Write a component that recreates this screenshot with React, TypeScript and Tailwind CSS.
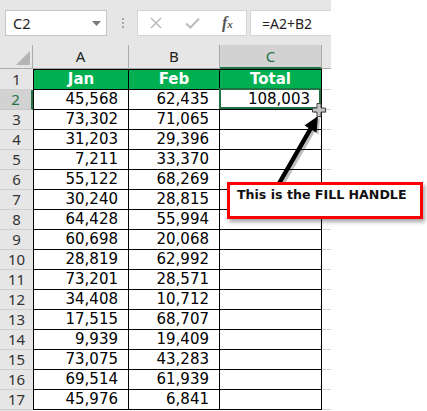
const data: [string, string][] = [
  ["45,568", "62,435"],
  ["73,302", "71,065"],
  ["31,203", "29,396"],
  ["7,211", "33,370"],
  ["55,122", "68,269"],
  ["30,240", "28,815"],
  ["64,428", "55,994"],
  ["60,698", "20,068"],
  ["28,819", "62,992"],
  ["73,201", "28,571"],
  ["34,408", "10,712"],
  ["17,515", "68,707"],
  ["9,939", "19,409"],
  ["73,075", "43,283"],
  ["69,514", "61,939"],
  ["45,976", "6,841"],
];

function TopBar() {
  return (
    <div className="flex h-[45px] w-[331px] items-start bg-[#e6e6e6] pl-[5px] pt-[10px] font-['Noto_Sans',sans-serif]">
      <div className="flex h-[26px] w-[102px] items-center justify-between border border-[#c6c6c6] bg-white pl-[7px] pr-[5px]">
        <span className="pt-[1px] text-[14.5px] leading-none text-[#222]">C2</span>
        <svg width="9" height="5" viewBox="0 0 9 5">
          <path d="M0 0 H9 L4.5 5 Z" fill="#7a7a7a" />
        </svg>
      </div>
      <div className="ml-[15px] mt-[8px] flex flex-col gap-[2px]">
        <div className="h-[2px] w-[2px] bg-[#a6a6a6]" />
        <div className="h-[2px] w-[2px] bg-[#a6a6a6]" />
        <div className="h-[2px] w-[2px] bg-[#a6a6a6]" />
      </div>
      <div className="ml-[13px] flex h-[26px] w-[110px] items-center border border-[#d4d4d4] bg-white pl-[12px]">
        <svg width="12" height="12" viewBox="0 0 12 12">
          <path d="M1 1 L11 11 M11 1 L1 11" stroke="#bdbdbd" strokeWidth="1.6" />
        </svg>
        <svg className="ml-[23px]" width="15" height="12" viewBox="0 0 15 12">
          <path d="M1 6.5 L5.5 10.5 L14 1.5" stroke="#bdbdbd" strokeWidth="2" fill="none" />
        </svg>
        <span className="ml-[22px] font-['Liberation_Serif',serif] text-[16px] font-bold italic leading-none text-[#555]">
          f<span className="text-[11px]">x</span>
        </span>
      </div>
      <div className="ml-[3px] flex h-[26px] flex-1 items-center border border-r-0 border-[#d4d4d4] bg-white pl-[11px] pt-[2px]">
        <span className="text-[14px] leading-none text-[#222]">=A2+B2</span>
      </div>
    </div>
  );
}

function HeaderRow() {
  return (
    <div className="flex h-[24px] w-[331px] bg-[#e6e6e6] font-['Noto_Sans',sans-serif] text-[15px] text-[#222]">
      <div className="relative w-[33px] border-b border-r border-[#ababab]">
        <svg className="absolute left-[15px] top-[5px]" width="16" height="16" viewBox="0 0 16 16">
          <path d="M15 1 V15 H1 Z" fill="#b4b4b4" />
        </svg>
      </div>
      <div className="flex w-[96px] items-center justify-center border-b border-r border-[#ababab]">A</div>
      <div className="flex w-[91px] items-center justify-center border-b border-r border-[#ababab]">B</div>
      <div className="flex w-[102px] items-center justify-center border-b-2 border-r border-b-[#217346] border-r-[#ababab] bg-[#d2d2d2] text-[#217346]">
        C
      </div>
      <div className="flex-1 border-b border-[#ababab]" />
    </div>
  );
}

function RowHead({ n, selected }: { n: number; selected?: boolean }) {
  return selected ? (
    <div className="flex w-[33px] items-center justify-center border-b border-r-2 border-b-[#c8c8c8] border-r-[#217346] bg-[#d2d2d2] font-['Noto_Sans',sans-serif] text-[15px] font-normal text-[#217346]">
      {n}
    </div>
  ) : (
    <div className="flex w-[33px] items-center justify-center border-b border-[#cfcfcf] bg-[#e6e6e6] font-['Noto_Sans',sans-serif] text-[15px] font-normal text-[#333]">
      {n}
    </div>
  );
}

export default function App() {
  return (
    <div className="relative h-[411px] w-[427px] overflow-hidden bg-white">
      <div className="w-[331px]">
        <TopBar />
        <HeaderRow />
        {/* Row 1 */}
        <div className="flex h-[21px] w-[331px] font-['DejaVu_Sans',sans-serif] text-[15px] font-bold leading-none text-white">
          <RowHead n={1} />
          <div className="flex w-[96px] items-center justify-center border border-black bg-[#00b050]">Jan</div>
          <div className="flex w-[91px] items-center justify-center border-y border-r border-black bg-[#00b050]">Feb</div>
          <div className="flex w-[102px] items-center justify-center border-y border-r border-black bg-[#00b050]">Total</div>
          <div className="flex-1 border-b border-[#d4d4d4]" />
        </div>
        {data.map((r, i) => {
          const n = i + 2;
          return (
            <div key={n} className="flex h-[20px] w-[331px] font-['DejaVu_Sans',sans-serif] text-[15px] leading-none text-black">
              <RowHead n={n} selected={n === 2} />
              <div className="flex w-[96px] items-center justify-end border-x border-b border-black pr-[10px]">{r[0]}</div>
              <div className="flex w-[91px] items-center justify-end border-b border-r border-black pr-[10px]">{r[1]}</div>
              <div className="relative flex w-[102px] items-center justify-end border-b border-r border-black pr-[11px]">
                {n === 2 ? "108,003" : ""}
                {n === 2 ? (
                  <div className="pointer-events-none absolute -left-px -top-[2px] bottom-0 right-0 border-2 border-[#217346]" />
                ) : null}
              </div>
              <div className="flex-1 border-b border-[#d4d4d4]" />
            </div>
          );
        })}
        <div className="flex h-[2px] w-[331px]">
          <div className="w-[33px] bg-[#e6e6e6]" />
        </div>
      </div>

      {/* Arrow */}
      <svg className="pointer-events-none absolute left-0 top-0" width="427" height="411" viewBox="0 0 427 411">
        <line x1="279" y1="189" x2="313" y2="130" stroke="rgba(0,0,0,0.25)" strokeWidth="5" strokeLinecap="round" />
        <path d="M320 118 L318.5 134.5 L306.5 127.5 Z" fill="rgba(0,0,0,0.25)" />
        <line x1="277" y1="187" x2="311" y2="128" stroke="#000" strokeWidth="4.5" strokeLinecap="round" />
        <path d="M318 116 L316.5 132.5 L304.5 125.5 Z" fill="#000" />
      </svg>

      {/* Fill handle cursor */}
      <svg className="pointer-events-none absolute left-[312px] top-[103px]" width="15" height="15" viewBox="0 0 15 15">
        <path d="M6 1.5 H10 V6 H14.5 V10 H10 V14.5 H6 V10 H1.5 V6 H6 Z" fill="rgba(0,0,0,0.2)" />
        <path d="M5 0.5 H9 V5 H13.5 V9 H9 V13.5 H5 V9 H0.5 V5 H5 Z" fill="#c4c4c4" stroke="#454545" strokeWidth="1" />
      </svg>

      {/* Callout */}
      <div className="absolute left-[227px] top-[182px] h-[37px] w-[196px] border-[3px] border-[#ff0000] bg-white pl-[7px] pt-[3px] font-['DejaVu_Sans',sans-serif] text-[12.6px] font-bold leading-[14px] text-[#111] shadow-[2px_3px_4px_rgba(0,0,0,0.35)]">
        This is the FILL HANDLE
      </div>
    </div>
  );
}
